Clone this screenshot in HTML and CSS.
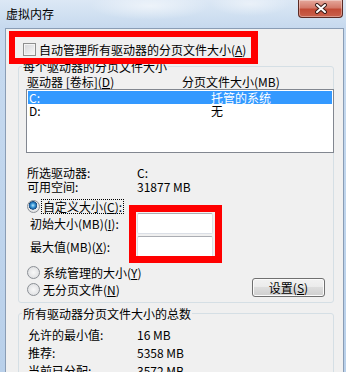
FILE: index.html
```html
<!DOCTYPE html>
<html lang="zh-CN">
<head>
  <meta charset="UTF-8">
  <title>虚拟内存</title>
  <link rel="stylesheet" href="styles.css">
</head>
<body>
<div class="window">
  <div class="titlebar">
    <span class="title">虚拟内存</span>
    <span class="close">
      <svg width="12" height="11" viewBox="0 0 12 11">
        <path d="M2 2 L10 9 M10 2 L2 9" stroke="#3a1d19" stroke-width="4" stroke-linecap="round"/>
        <path d="M2 2 L10 9 M10 2 L2 9" stroke="#ffffff" stroke-width="2" stroke-linecap="round"/>
      </svg>
    </span>
  </div>

  <div class="panel">
    <div class="auto-row">
      <span class="checkbox"></span>
      <span>自动管理所有驱动器的分页文件大小(<u>A</u>)</span>
    </div>

    <div class="group group-drives">
      <div class="group-title">每个驱动器的分页文件大小</div>
      <div class="list-head">
        <span class="col-drive">驱动器 [卷标](<u>D</u>)</span>
        <span>分页文件大小(MB)</span>
      </div>
      <div class="listbox">
        <div class="list-row selected"><span class="col-name">C:</span><span>托管的系统</span></div>
        <div class="list-row"><span class="col-name">D:</span><span>无</span></div>
      </div>

      <div class="info">
        <div class="info-row"><span class="info-label">所选驱动器:</span><span>C:</span></div>
        <div class="info-row"><span class="info-label">可用空间:</span><span>31877 MB</span></div>
      </div>

      <div class="radio-row row-custom">
        <span class="radio checked"></span>
        <span class="focus">自定义大小(<u>C</u>):</span>
      </div>
      <div class="field-row">
        <span class="field-label">初始大小(MB)(<u>I</u>):</span>
        <span class="textbox"></span>
      </div>
      <div class="field-row row-max">
        <span class="field-label">最大值(MB)(<u>X</u>):</span>
        <span class="textbox"></span>
      </div>
      <div class="radio-row row-system">
        <span class="radio"></span>
        <span class="radio-text">系统管理的大小(<u>Y</u>)</span>
      </div>
      <div class="radio-row row-none">
        <span class="radio-wrap">
          <span class="radio"></span>
          <span class="radio-text">无分页文件(<u>N</u>)</span>
        </span>
        <button class="btn">设置(<u>S</u>)</button>
      </div>
    </div>

    <div class="group group-total">
      <div class="group-title">所有驱动器分页文件大小的总数</div>
      <div class="totals">
        <div class="total-row"><span class="total-label">允许的最小值:</span><span>16 MB</span></div>
        <div class="total-row"><span class="total-label">推荐:</span><span>5358 MB</span></div>
        <div class="total-row"><span class="total-label">当前已分配:</span><span>3572 MB</span></div>
      </div>
    </div>
  </div>

  <div class="mark mark-auto"></div>
  <div class="mark mark-size"></div>
</div>
</body>
</html>
```

FILE: styles.css
```css
body {
  margin: 0;
  padding: 0;
  font-family: "Noto Sans CJK SC", "Noto Sans", sans-serif;
  font-size: 12px;
  color: #000000;
}

.window {
  position: relative;
  width: 346px;
  height: 372px;
  overflow: hidden;
  background: linear-gradient(to bottom, #c8dbf0, #b9d0ea);
}

.titlebar {
  display: flex;
  align-items: flex-start;
  height: 28px;
  background:
    radial-gradient(ellipse 60px 14px at 150px 6px, rgba(255, 255, 255, 0.55), rgba(255, 255, 255, 0)),
    radial-gradient(ellipse 40px 12px at 250px 4px, rgba(255, 255, 255, 0.45), rgba(255, 255, 255, 0)),
    linear-gradient(to bottom, #dce8f5, #c6d9ee);
}

.title {
  padding: 6px 0 0 6px;
  line-height: 16px;
}

.close {
  display: flex;
  align-items: center;
  justify-content: center;
  margin-left: auto;
  margin-right: 3px;
  width: 43px;
  height: 17px;
  border: 1px solid #5b2a24;
  border-top: none;
  border-radius: 0 0 4px 4px;
  background: linear-gradient(to bottom, #e5a89c 0%, #d47a6a 45%, #c24b36 55%, #c9614c 100%);
  box-shadow: inset 0 0 0 1px rgba(255, 255, 255, 0.35);
}

.panel {
  margin: 0 2px 0 5px;
  height: 400px;
  border: 1px solid #8a9db5;
  background: #f0f0f0;
}

.auto-row {
  display: flex;
  align-items: center;
  gap: 3px;
  height: 16px;
  padding: 12px 0 0 17px;
}

.checkbox {
  width: 11px;
  height: 11px;
  border: 1px solid #8e8f8f;
  background: linear-gradient(135deg, #d4d6d9, #f7f7f7);
  box-shadow: inset 0 0 0 1px #f4f4f4;
}

.group {
  margin: 0 9px 0 12px;
  border: 1px solid #d5dfe5;
  border-radius: 3px;
}

.group-drives {
  margin-top: 9px;
  padding-bottom: 5px;
}

.group-total {
  margin-top: 10px;
}

.group-title {
  width: fit-content;
  margin: -7px 0 0 3px;
  padding: 0 1px;
  line-height: 13px;
  background: #f0f0f0;
}

.list-head {
  display: flex;
  margin-top: 2px;
  padding-left: 8px;
  line-height: 13px;
}

.col-drive {
  width: 155px;
}

.listbox {
  margin: 1px -1px 0 7px;
  height: 62px;
  padding: 1px;
  border: 1px solid #828790;
  background: #ffffff;
  box-sizing: content-box;
  height: 60px;
}

.list-row {
  display: flex;
  height: 13px;
  line-height: 13px;
  padding-left: 1px;
}

.list-row.selected {
  background: #3399ff;
  color: #ffffff;
}

.col-name {
  width: 182px;
}

.info {
  margin-top: 13px;
  padding-left: 8px;
}

.info-row {
  display: flex;
  line-height: 14px;
}

.info-label {
  width: 110px;
}

.radio-row {
  display: flex;
  align-items: center;
  height: 13px;
  padding-left: 8px;
}

.row-custom {
  margin-top: 6px;
}

.row-system {
  margin-top: 9px;
}

.row-none {
  align-items: flex-end;
  height: 18px;
  padding-right: 8px;
}

.radio-wrap {
  display: flex;
  align-items: center;
  margin-bottom: 1px;
}

.radio {
  width: 11px;
  height: 11px;
  border: 1px solid #8b8f95;
  border-radius: 50%;
  background: radial-gradient(circle at 50% 50%, #f8f8f8 0%, #e2e3e5 70%, #d3d5d8 100%);
  flex-shrink: 0;
}

.radio.checked {
  background:
    radial-gradient(circle at 45% 40%, #bfe6fb 0px, #3c9ad8 2px, #1d5fa0 3.5px, #16477a 4px, rgba(0, 0, 0, 0) 4.5px),
    radial-gradient(circle at 50% 50%, #f8f8f8 0%, #e2e3e5 70%, #d3d5d8 100%);
}

.radio-text {
  margin-left: 3px;
  line-height: 13px;
}

.focus {
  margin-left: 2px;
  padding: 0 1px;
  line-height: 13px;
  outline: 1px dotted #000000;
}

.field-row {
  display: flex;
  align-items: center;
  height: 21px;
  padding-left: 11px;
}

.row-max {
  margin-top: 2px;
}

.field-label {
  width: 107px;
  line-height: 13px;
}

.textbox {
  width: 74px;
  height: 19px;
  border: 1px solid #dbdfe6;
  border-top-color: #abadb3;
  border-radius: 2px;
  background: #ffffff;
}

.btn {
  margin-left: auto;
  width: 73px;
  height: 19px;
  padding: 0;
  border: 1px solid #707070;
  border-radius: 3px;
  font-family: inherit;
  font-size: 12px;
  line-height: 15px;
  color: #000000;
  background: linear-gradient(to bottom, #f2f2f2 0%, #ebebeb 50%, #dddddd 50%, #cfcfcf 100%);
  box-shadow: inset 0 0 0 1px #fbfbfb;
}

.totals {
  margin-top: 6px;
  padding-left: 9px;
}

.total-row {
  display: flex;
  line-height: 18px;
}

.total-label {
  width: 109px;
}

.mark {
  position: absolute;
  box-sizing: border-box;
  border-style: solid;
  border-color: #ff0000;
}

.mark-auto {
  left: 9px;
  top: 31px;
  width: 249px;
  height: 33px;
  border-width: 6px 7px 6px 6px;
}

.mark-size {
  left: 129px;
  top: 205px;
  width: 93px;
  height: 58px;
  border-width: 7px;
}
```
